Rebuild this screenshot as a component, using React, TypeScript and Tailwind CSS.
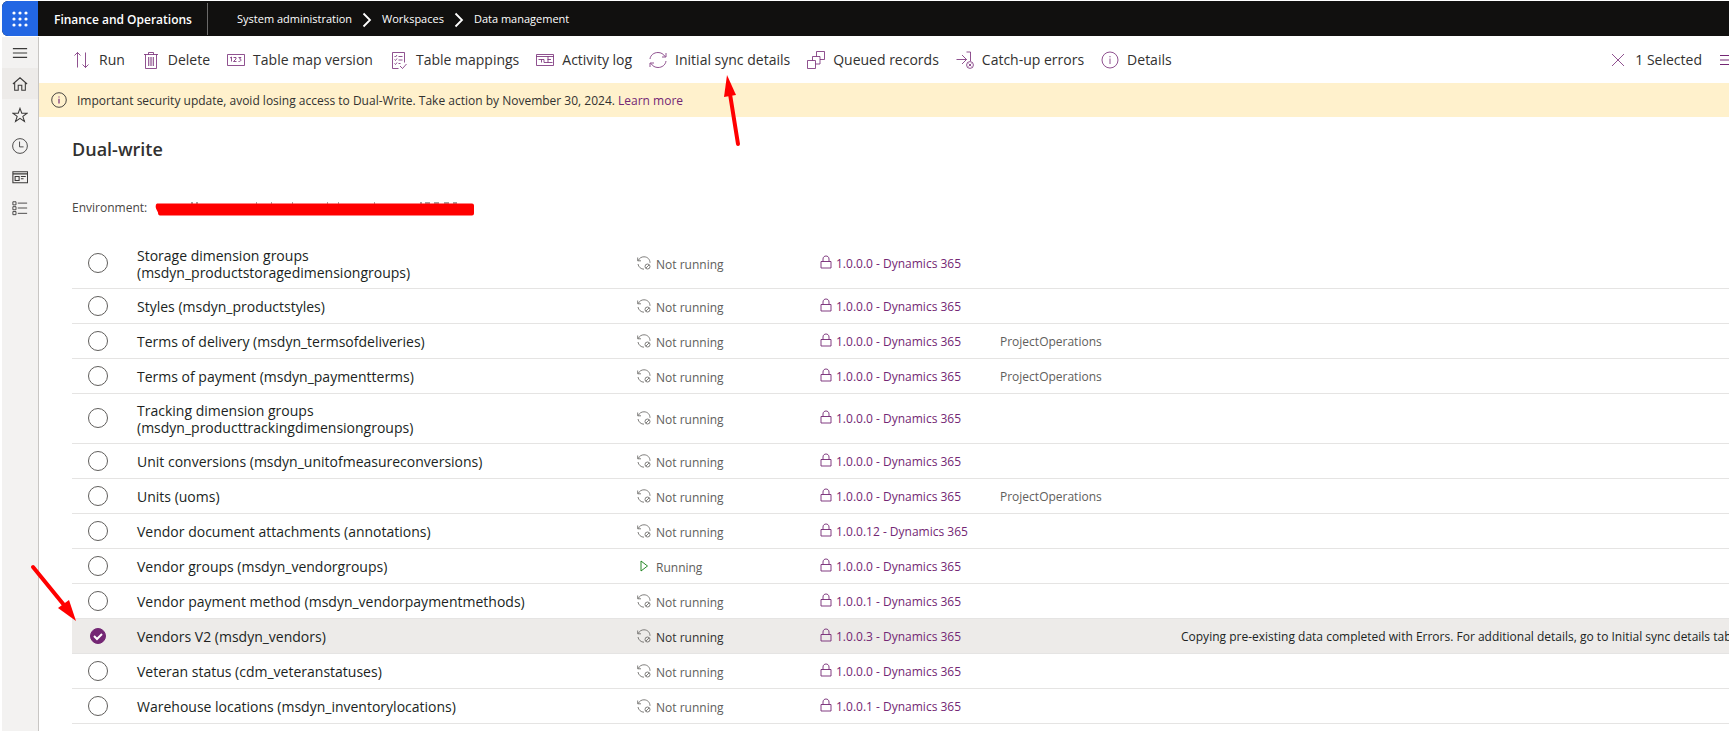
import type { ReactNode } from 'react';

type IconProps = { children: ReactNode; className?: string };

function Icon({ children, className = 'h-[18px] w-[18px]' }: IconProps) {
  return (
    <svg
      viewBox="0 0 18 18"
      fill="none"
      stroke="currentColor"
      strokeWidth="1"
      aria-hidden="true"
      className={`shrink-0 ${className}`}
    >
      {children}
    </svg>
  );
}

const commands = [
  {
    label: 'Run',
    icon: (
      <Icon>
        <path d="M4.500 16.500V1.500M1.500 4.500l3-3 3 3M12.500 1.500v15M9.500 13.500l3 3 3-3" />
      </Icon>
    ),
  },
  {
    label: 'Delete',
    icon: (
      <Icon>
        <path d="M2 3.500h14M6.500 3.500v-2h5v2M3.500 3.500v14h11v-14" />
        <path d="M6.500 6v9M8.200 6v9M9.800 6v9M11.500 6v9" strokeWidth=".9" />
      </Icon>
    ),
  },
  {
    label: 'Table map version',
    icon: (
      <Icon>
        <path d="M.5 3.500h17v11H.5z" />
        <path d="M3 7l1.500-1v4.500M6.500 6.500h2.500v1.500l-2.500 2.500H9.500M11.500 6.500H14l-1.500 1.500c2.300 0 2 2.500-1 2.500" />
      </Icon>
    ),
  },
  {
    label: 'Table mappings',
    icon: (
      <Icon>
        <path d="M8.500 17.500h-6v-16h12v10" />
        <path d="M4.500 5l1 1 1.500-2M8.500 5.500h4M4.500 8.500l1 1 1.500-2M8.500 9h4M4.500 12.500l1 1 1.500-2M8.500 12.500h2M10 15l2.500 2.500 4-4.500" />
      </Icon>
    ),
  },
  {
    label: 'Activity log',
    icon: (
      <Icon>
        <path d="M.5 3.500h17v11H.5zM.5 5.500h17M2.500 8.500h5.500M5.500 8.500v3M8 8.500v3h4v-6M11.500 8.500H15M12 11.500h4.500" />
      </Icon>
    ),
  },
  {
    label: 'Initial sync details',
    icon: (
      <Icon>
        <path d="M1 8C1.500 4 5 1.500 9 1.500c3 0 5.500 1.500 7 4M17 2v4h-4M17 10c-.5 4-4 6.500-8 6.500-3 0-5.500-1.500-7-4M1 16v-4h4" />
      </Icon>
    ),
  },
  {
    label: 'Queued records',
    icon: (
      <Icon>
        <path d="M9.500 5.500v-5h8v8H13M5.500 9.500v-4h7.500v7.500H8.500M.5 9.500h8v8h-8z" />
      </Icon>
    ),
  },
  {
    label: 'Catch-up errors',
    icon: (
      <Icon>
        <path d="M.5 8.500h10M6 4l4.500 4.500L6 13M10.500 1h4v9" />
        <circle cx="14" cy="14" r="3.400" />
        <path d="M12.600 12.600l2.800 2.800M15.400 12.600l-2.800 2.800" />
      </Icon>
    ),
  },
  {
    label: 'Details',
    icon: (
      <Icon>
        <circle cx="9" cy="9" r="8" />
        <path d="M9 7.500V13M9 5v1.300" />
      </Icon>
    ),
  },
];

const navItems = [
  {
    label: 'Expand the navigation pane',
    icon: <path d="M1 4h16M1 9h16M1 14h16" strokeWidth="1.400" />,
  },
  {
    label: 'Home',
    active: true,
    icon: <path d="M1 9l8-7 8 7M3 7.500V16h4v-5.500h4V16h4V7.500" strokeWidth="1.200" />,
  },
  {
    label: 'Favorites',
    icon: <path d="M9 1.500l2 5.500h6l-4.800 3.500L14 16.200l-5-3.500-5 3.500 1.800-5.700L1 7h6z" strokeWidth="1.200" />,
  },
  {
    label: 'Recent',
    icon: (
      <>
        <circle cx="9" cy="9" r="8.300" />
        <path d="M8.500 4v6H13" />
      </>
    ),
  },
  {
    label: 'Workspaces',
    icon: <path d="M1 3h16.500v12.500H1zM1 5.500h16.500M3.500 8.500H8v4.500H3.500zM10 8.500h5.500M10 11h3" strokeWidth="1.200" />,
  },
  {
    label: 'Modules',
    icon: <path d="M1 2h3.500v3.500H1zM1 7.500h3.500V11H1zM1 13h3.500v3.500H1zM6.500 3.500H17M6.500 9H17M6.500 15H17" />,
  },
];

type TableMap = {
  name: string;
  entity: string;
  version: string;
  group?: string;
  message?: string;
  running?: boolean;
  selected?: boolean;
};

const maps: TableMap[] = [
  { name: 'Storage dimension groups', entity: 'msdyn_productstoragedimensiongroups', version: '1.0.0.0' },
  { name: 'Styles', entity: 'msdyn_productstyles', version: '1.0.0.0' },
  { name: 'Terms of delivery', entity: 'msdyn_termsofdeliveries', version: '1.0.0.0', group: 'ProjectOperations' },
  { name: 'Terms of payment', entity: 'msdyn_paymentterms', version: '1.0.0.0', group: 'ProjectOperations' },
  { name: 'Tracking dimension groups', entity: 'msdyn_producttrackingdimensiongroups', version: '1.0.0.0' },
  { name: 'Unit conversions', entity: 'msdyn_unitofmeasureconversions', version: '1.0.0.0' },
  { name: 'Units', entity: 'uoms', version: '1.0.0.0', group: 'ProjectOperations' },
  { name: 'Vendor document attachments', entity: 'annotations', version: '1.0.0.12' },
  { name: 'Vendor groups', entity: 'msdyn_vendorgroups', version: '1.0.0.0', running: true },
  { name: 'Vendor payment method', entity: 'msdyn_vendorpaymentmethods', version: '1.0.0.1' },
  {
    name: 'Vendors V2',
    entity: 'msdyn_vendors',
    version: '1.0.0.3',
    message: 'Copying pre-existing data completed with Errors. For additional details, go to Initial sync details tab',
    selected: true,
  },
  { name: 'Veteran status', entity: 'cdm_veteranstatuses', version: '1.0.0.0' },
  { name: 'Warehouse locations', entity: 'msdyn_inventorylocations', version: '1.0.0.1' },
];

function TopBar() {
  return (
    <header className="flex h-[35px] items-center rounded-l-md bg-[#11100f] text-white">
      <button aria-label="App launcher" className="flex h-full w-9 items-center justify-center rounded-l-md bg-[#2266e3]">
        <svg viewBox="0 0 16 16" fill="currentColor" className="h-4 w-4">
          {[2, 8, 14].map(y => [2, 8, 14].map(x => <circle key={`${x}-${y}`} cx={x} cy={y} r="1.600" />))}
        </svg>
      </button>
      <div className="flex h-8 w-[170px] items-center border-r border-[#6b6a69] pt-0.5 pl-4 text-xs font-semibold whitespace-nowrap">
        Finance and Operations
      </div>
      <nav aria-label="Breadcrumb" className="flex items-center gap-2.5 pt-0.5 pl-[29px] text-[11px]">
        {['System administration', 'Workspaces', 'Data management'].map((crumb, i) => (
          <div key={crumb} className="flex items-center gap-2.5">
            {i > 0 && (
              <svg viewBox="0 0 10 16" fill="none" stroke="currentColor" strokeWidth="1.800" className="h-4 w-2.5">
                <path d="M1.500 1.500L8 8l-6.500 6.500" />
              </svg>
            )}
            <a href="#">{crumb}</a>
          </div>
        ))}
      </nav>
    </header>
  );
}

function SideNav() {
  return (
    <nav aria-label="Main" className="flex w-[37px] shrink-0 flex-col border-r border-[#c8c6c4] bg-[#f3f2f1] text-[#3b3a39]">
      {navItems.map(item => (
        <button
          key={item.label}
          aria-label={item.label}
          className={`flex h-[31px] items-center justify-center ${item.active ? 'bg-[#edebe9]' : ''}`}
        >
          <Icon className="h-4 w-4">{item.icon}</Icon>
        </button>
      ))}
    </nav>
  );
}

function CommandBar() {
  return (
    <div className="flex h-[46px] items-center pl-[34px] text-sm whitespace-nowrap text-[#323130]">
      <div className="flex items-center gap-[17px]">
        {commands.map(({ label, icon }) => (
          <button key={label} className="flex items-center gap-2">
            <span className="text-[#742774]/80">{icon}</span>
            {label}
          </button>
        ))}
      </div>
      <div className="-mr-2 ml-auto flex items-center gap-[17px]">
        <button className="flex items-center gap-2">
          <Icon className="h-[18px] w-[18px] text-[#742774]/80">
            <path d="M3 3l12 12M15 3L3 15" />
          </Icon>
          1 Selected
        </button>
        <button aria-label="View options" className="text-[#742774]">
          <Icon>
            <path d="M1 4.500h16M1 9h16M1 13.500h16" />
          </Icon>
        </button>
      </div>
    </div>
  );
}

function StatusIcon({ running }: { running?: boolean }) {
  if (running) {
    return (
      <svg viewBox="0 0 14 14" fill="none" stroke="#107c10" strokeWidth=".9" className="mb-1 h-3.5 w-3.5">
        <path d="M4 2l6.500 5L4 12z" />
      </svg>
    );
  }
  return (
    <svg viewBox="0 0 14 14" fill="none" stroke="#605e5c" strokeWidth=".8" className="mb-1 h-3.5 w-3.5">
      <path d="M.7 1.500v3.300h3.300M1.200 4.500C2.500 2 4.500.8 7 .8c3.500 0 6 2.500 6 6M1 8c.5 3 3 5.200 6 5.200" />
      <circle cx="10.500" cy="10.500" r="2.500" />
      <path d="M9 12l3-3" />
    </svg>
  );
}

function MapRow({ map }: { map: TableMap }) {
  const id = `map-${map.entity}`;
  // Long names push the entity onto its own line
  const height = map.entity.length > 34 ? 'h-[50px]' : 'h-[35px]';

  return (
    <tr className={`border-b border-[#e5e4e3] ${height} ${map.selected ? 'bg-[#edebe9]' : ''}`}>
      <td className="p-0 pl-4">
        <div className="grid h-5 w-5 place-items-center">
          <input
            type="radio"
            name="table-map"
            id={id}
            defaultChecked={map.selected}
            className="peer col-start-1 row-start-1 h-5 w-5 appearance-none rounded-full border border-[#605e5c] checked:h-4 checked:w-4 checked:border-[#742774] checked:bg-[#742774]"
          />
          <svg
            viewBox="0 0 12 12"
            fill="none"
            stroke="white"
            strokeWidth="2"
            className="pointer-events-none invisible col-start-1 row-start-1 h-3 w-3 peer-checked:visible"
          >
            <path d="M2 6l3 3 5-5" />
          </svg>
        </div>
      </td>
      <td className="p-0 pt-0.5 pr-20 text-sm leading-[17px] text-[#201f1e]">
        <label htmlFor={id}>
          {map.name} ({map.entity})
        </label>
      </td>
      <td className={`p-0 pt-1 ${map.selected ? 'text-[#323130]' : 'text-[#605e5c]'}`}>
        <div className="flex items-center gap-[5px]">
          <StatusIcon running={map.running} />
          {map.running ? 'Running' : 'Not running'}
        </div>
      </td>
      <td className="p-0 pt-0.5">
        <a href="#" className="flex items-center gap-1 text-[#742774]">
          <svg viewBox="0 0 12 14" fill="none" stroke="currentColor" strokeWidth=".9" className="mb-1 h-3.5 w-3">
            <path d="M1 6.500h10v6.500H1zM3 6.500V4c0-4 6-4 6 0v2.500" />
          </svg>
          {map.version} - Dynamics 365
        </a>
      </td>
      <td className="p-0 pt-0.5 text-[#605e5c]">{map.group}</td>
      <td className="p-0 pt-0.5 whitespace-nowrap text-[#201f1e]">{map.message}</td>
    </tr>
  );
}

export default function App() {
  return (
    <div className="relative flex min-h-screen flex-col overflow-hidden bg-white pt-px pl-0.5 font-['Open_Sans','Noto_Sans',sans-serif]">
      <TopBar />
      <div className="flex flex-1 pt-px">
        <SideNav />
        <div className="min-w-0 flex-1">
          <CommandBar />
          <div className="flex h-[34px] items-center gap-2.5 bg-[#fff1cc] pl-3 text-xs text-[#323130]">
            <Icon className="h-4 w-4">
              <circle cx="9" cy="9" r="8.200" />
              <path d="M9 7.500V13M9 5v1.300" className="stroke-[#742774]" strokeWidth="1.300" />
            </Icon>
            <p className="pt-0.5">
              Important security update, avoid losing access to Dual-Write. Take action by November 30, 2024.{' '}
              <a href="#" className="text-[#742774]">Learn more</a>
            </p>
          </div>
          <main className="pt-[18px] pl-[33px]">
            <h1 className="text-lg font-semibold text-[#323130]">Dual-write</h1>
            <div className="mt-[33px] flex h-6 items-center gap-2 text-xs text-[#484644]">
              <span>Environment:</span>
              {/* Environment URL is struck out with a marker */}
              <svg viewBox="0 0 320 14" className="mt-0.5 h-3.5 w-80">
                <path
                  d="M36 1h2M41 1h2M101 1h1M116 1h1M137 1h1M172 1h1M183 1h1M219 1h1M265 1h2M270 1h5M279 1h5M289 1h5M298 1h4"
                  stroke="#484644"
                />
                <path d="M2 1.500h315q2 0 2 2v8q0 2-2 2H5q-2 0-2-3l-2-4q-1-4 1-5z" fill="#f00" />
              </svg>
            </div>
            <table className="mt-[18px] w-full table-fixed border-collapse text-left text-xs">
              <colgroup>
                <col className="w-[65px]" />
                <col className="w-[500px]" />
                <col className="w-[183px]" />
                <col className="w-[180px]" />
                <col className="w-[181px]" />
                <col />
              </colgroup>
              <tbody>
                {maps.map(map => (
                  <MapRow key={map.entity} map={map} />
                ))}
              </tbody>
            </table>
          </main>
        </div>
      </div>

      {/* Callout arrows */}
      <svg viewBox="0 0 20 74" className="pointer-events-none absolute top-[74px] left-[721px] h-[74px] w-5">
        <path d="M9 20l8 50" stroke="#f00" strokeWidth="4" strokeLinecap="round" />
        <path d="M6 1l9 20-12 2z" fill="#f00" />
      </svg>
      <svg viewBox="0 0 50 60" className="pointer-events-none absolute top-[564px] left-[29px] h-[60px] w-[50px]">
        <path d="M4 3l31 38" stroke="#f00" strokeWidth="4" strokeLinecap="round" />
        <path d="M47 57L29 44l11-8z" fill="#f00" />
      </svg>
    </div>
  );
}
